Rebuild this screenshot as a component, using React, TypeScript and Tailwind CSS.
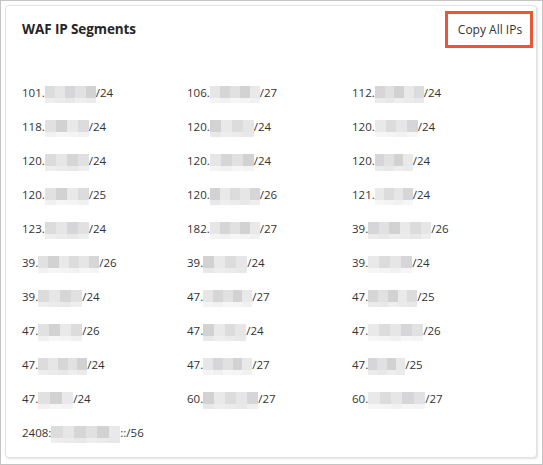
import React from 'react';

type Seg = { pre: string; w: number; post: string };

const rows: Seg[][] = [
  [{ pre: '101.', w: 51, post: '/24' }, { pre: '106.', w: 50, post: '/27' }, { pre: '112.', w: 49, post: '/24' }],
  [{ pre: '118.', w: 44, post: '/24' }, { pre: '120.', w: 44, post: '/24' }, { pre: '120.', w: 43, post: '/24' }],
  [{ pre: '120.', w: 44, post: '/24' }, { pre: '120.', w: 44, post: '/24' }, { pre: '120.', w: 38, post: '/24' }],
  [{ pre: '120.', w: 44, post: '/25' }, { pre: '120.', w: 50, post: '/26' }, { pre: '121.', w: 38, post: '/24' }],
  [{ pre: '123.', w: 44, post: '/24' }, { pre: '182.', w: 50, post: '/27' }, { pre: '39.', w: 63, post: '/26' }],
  [{ pre: '39.', w: 61, post: '/26' }, { pre: '39.', w: 44, post: '/24' }, { pre: '39.', w: 44, post: '/24' }],
  [{ pre: '39.', w: 44, post: '/24' }, { pre: '47.', w: 49, post: '/27' }, { pre: '47.', w: 49, post: '/25' }],
  [{ pre: '47.', w: 44, post: '/26' }, { pre: '47.', w: 43, post: '/24' }, { pre: '47.', w: 55, post: '/26' }],
  [{ pre: '47.', w: 49, post: '/24' }, { pre: '47.', w: 49, post: '/27' }, { pre: '47.', w: 37, post: '/25' }],
  [{ pre: '47.', w: 35, post: '/24' }, { pre: '60.', w: 55, post: '/27' }, { pre: '60.', w: 57, post: '/27' }],
  [{ pre: '2408:', w: 69, post: '::/56' }],
];

const topShades = ['bg-[#dcdcdc]', 'bg-[#e6e6e6]', 'bg-[#d6d6d8]', 'bg-[#e1e1e1]', 'bg-[#d2d2d2]', 'bg-[#e9e9e9]'];
const lowShades = ['bg-[#eeeeee]', 'bg-[#f4f4f4]', 'bg-[#ebebeb]', 'bg-[#f1f1f1]', 'bg-[#e8e8e8]', 'bg-[#f6f6f6]'];

// pixelated placeholder for the masked part of an address
function Blur({ w, seed }: { w: number; seed: number }) {
  const n = Math.ceil(w / 12);
  const cells = Array.from({ length: n }, (_, i) => i);
  return (
    <span className="inline-flex flex-col h-[17px] translate-y-[1px]" style={{ width: w }}>
      <span className="flex h-[12px]">
        {cells.map((i) => (
          <span key={i} className={`h-full flex-1 ${topShades[(i + seed) % topShades.length]}`} />
        ))}
      </span>
      <span className="flex h-[5px]">
        {cells.map((i) => (
          <span key={i} className={`h-full flex-1 ${lowShades[(i * 2 + seed) % lowShades.length]}`} />
        ))}
      </span>
    </span>
  );
}

export default function App() {
  return (
    <div className="w-[543px] h-[465px] bg-white border border-[#c4c4c4] pl-1 pt-1 pr-[5px] pb-[6px]" style={{ fontFamily: '"Open Sans", "Noto Sans", Arial, sans-serif' }}>
      <div className="h-full rounded-[4px] border border-[#e2e2e2] shadow-[1px_1px_2px_rgba(0,0,0,0.12)] bg-white">
        <div className="flex items-center justify-between pl-4 pr-[3px] pt-[5px]">
          <h1 className="text-[13.5px] font-bold text-[#262626] tracking-[-0.1px]">WAF IP Segments</h1>
          <button className="h-[37px] w-[88px] border-[3px] border-[#ee5535] flex items-center justify-center pl-[2px] text-[12px] text-[#333]">
            Copy All IPs
          </button>
        </div>
        <div className="pl-4 pt-[28px]">
          {rows.map((row, r) => (
            <div key={r} className="grid grid-cols-[165px_165px_165px] h-[34px] items-center">
              {row.map((s, c) => (
                <div key={c} className="flex items-center text-[11.5px] text-[#333] leading-none">
                  <span>{s.pre}</span>
                  <Blur w={s.w} seed={r * 3 + c} />
                  <span>{s.post}</span>
                </div>
              ))}
            </div>
          ))}
        </div>
      </div>
    </div>
  );
}
